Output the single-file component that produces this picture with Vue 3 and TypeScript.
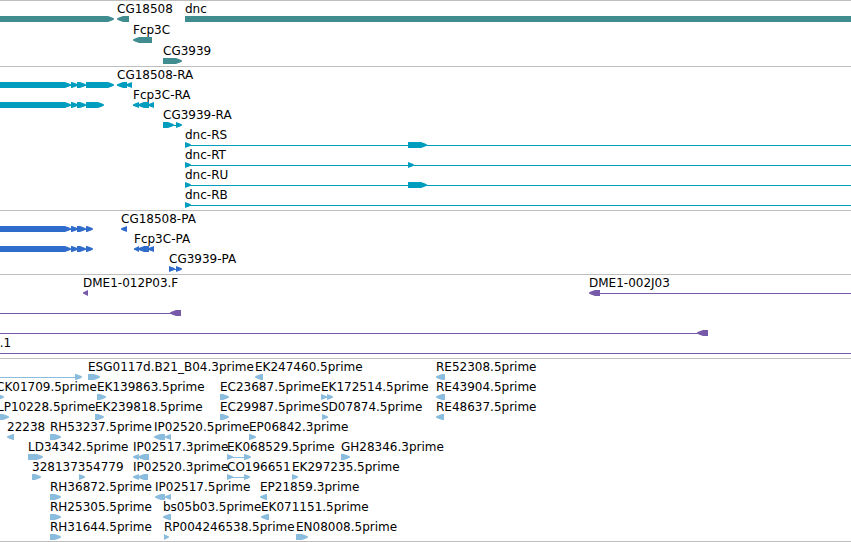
<script setup lang="ts">
type Glyph =
  | { kind: 'right' | 'left' | 'box'; from: number; to: number }
  | { kind: 'line'; from: number; to: number | 'end' }

interface Label {
  x: number
  text: string
}

interface Row {
  labels: Label[]
  glyphs: Glyph[]
}

interface Track {
  id: string
  name: string
  rows: Row[]
}

const r = (from: number, to: number): Glyph => ({ kind: 'right', from, to })
const l = (from: number, to: number): Glyph => ({ kind: 'left', from, to })
const box = (from: number, to: number): Glyph => ({ kind: 'box', from, to })
const line = (from: number, to: number | 'end'): Glyph => ({ kind: 'line', from, to })
const t = (x: number, text: string): Label => ({ x, text })
const row = (labels: Label[], glyphs: Glyph[]): Row => ({ labels, glyphs })

const tracks: Track[] = [
  {
    id: 'gene',
    name: 'Genes',
    rows: [
      row([t(117, 'CG18508'), t(185, 'dnc')], [r(-10, 114), l(117, 129), box(185, 4000)]),
      row([t(133, 'Fcp3C')], [l(133, 152)]),
      row([t(163, 'CG3939')], [r(163, 182)]),
    ],
  },
  {
    id: 'transcript',
    name: 'Transcripts',
    rows: [
      row([t(117, 'CG18508-RA')], [line(60, 90), r(-10, 71), r(71, 78), r(77, 86), r(86, 114), line(117, 132), l(117, 127), l(126, 132)]),
      row([t(133, 'Fcp3C-RA')], [line(60, 90), r(-10, 71), r(71, 78), r(77, 86), r(86, 104), line(133, 154), l(133, 139), l(138, 149), l(148, 154)]),
      row([t(163, 'CG3939-RA')], [line(163, 178), r(163, 174), r(176, 182)]),
      row([t(185, 'dnc-RS')], [line(185, 'end'), r(185, 191), r(408, 427)]),
      row([t(185, 'dnc-RT')], [line(185, 'end'), r(185, 191), r(408, 414)]),
      row([t(185, 'dnc-RU')], [line(185, 'end'), r(185, 191), r(408, 427)]),
      row([t(185, 'dnc-RB')], [line(185, 'end'), r(185, 191)]),
    ],
  },
  {
    id: 'protein',
    name: 'Proteins',
    rows: [
      row([t(121, 'CG18508-PA')], [line(60, 88), r(-10, 71), r(71, 78), r(77, 86), r(86, 93), l(121, 127)]),
      row([t(134, 'Fcp3C-PA')], [line(60, 88), r(-10, 71), r(71, 78), r(77, 86), r(86, 93), line(134, 154), l(134, 139), l(138, 149), l(148, 154)]),
      row([t(169, 'CG3939-PA')], [line(169, 178), r(169, 175), r(176, 182)]),
    ],
  },
  {
    id: 'clone',
    name: 'Clones',
    rows: [
      row([t(83, 'DME1-012P03.F'), t(589, 'DME1-002J03')], [l(83, 88), line(590, 'end'), l(589, 600)]),
      row([], [line(0, 175), l(170, 181)]),
      row([], [line(0, 702), l(697, 708)]),
      row([t(-8, '1.1')], [line(0, 'end')]),
    ],
  },
  {
    id: 'est',
    name: 'ESTs',
    rows: [
      row(
        [t(88, 'ESG0117d.B21_B04.3prime'), t(255, 'EK247460.5prime'), t(436, 'RE52308.5prime')],
        [line(0, 78), r(75, 82), r(88, 100), l(255, 263), l(436, 445)],
      ),
      row(
        [t(-4, 'CK01709.5prime'), t(97, 'EK139863.5prime'), t(220, 'EC23687.5prime'), t(321, 'EK172514.5prime'), t(436, 'RE43904.5prime')],
        [r(-5, 4), r(97, 106), r(220, 229), line(321, 330), r(321, 327), r(327, 333), l(436, 445)],
      ),
      row(
        [t(-3, 'LP10228.5prime'), t(95, 'EK239818.5prime'), t(220, 'EC29987.5prime'), t(321, 'SD07874.5prime'), t(436, 'RE48637.5prime')],
        [r(-3, 9), r(95, 104), r(220, 229), r(322, 328), l(436, 444)],
      ),
      row(
        [t(7, '22238'), t(50, 'RH53237.5prime'), t(154, 'IP02520.5prime'), t(249, 'EP06842.3prime')],
        [l(7, 14), r(50, 61), l(154, 165), l(165, 171), r(249, 256)],
      ),
      row(
        [t(28, 'LD34342.5prime'), t(133, 'IP02517.3prime'), t(227, 'EK068529.5prime'), t(341, 'GH28346.3prime')],
        [r(28, 43), l(133, 139), l(138, 149), line(227, 246), r(227, 233), r(244, 251), r(341, 350)],
      ),
      row(
        [t(32, '328137354779'), t(133, 'IP02520.3prime'), t(227, 'CO196651'), t(292, 'EK297235.5prime')],
        [r(32, 41), r(79, 85), l(133, 139), l(138, 148), line(227, 246), r(227, 233), r(244, 250), r(292, 298)],
      ),
      row(
        [t(50, 'RH36872.5prime'), t(155, 'IP02517.5prime'), t(260, 'EP21859.3prime')],
        [r(50, 61), l(155, 165), l(165, 171), l(260, 267)],
      ),
      row(
        [t(50, 'RH25305.5prime'), t(163, 'bs05b03.5prime'), t(261, 'EK071151.5prime')],
        [r(50, 61), l(163, 171), l(261, 269)],
      ),
      row(
        [t(50, 'RH31644.5prime'), t(164, 'RP004246538.5prime'), t(296, 'EN08008.5prime')],
        [r(50, 61), r(164, 169), r(296, 308)],
      ),
    ],
  },
]

const TOP = 15
const MID = 18
const BOTTOM = 21

// Outline of a feature: a flat body whose last few pixels taper to a blunt tip.
function arrow(g: Glyph): string {
  const to = g.to as number
  const [tail, head, step] = g.kind === 'right' ? [g.from, to, -1] : [to, g.from, 1]
  const tip = Math.min(6, to - g.from)
  const shoulder = head + step * tip
  const cheek = head + step * 2
  return [
    [tail, TOP],
    [shoulder, TOP],
    [cheek, TOP + 1.5],
    [head, MID - 0.6],
    [head, MID + 0.4],
    [cheek, BOTTOM - 1.5],
    [shoulder, BOTTOM],
    [tail, BOTTOM],
  ]
    .map((p) => p.join(','))
    .join(' ')
}
</script>

<template>
  <main class="browser">
    <section v-for="track in tracks" :key="track.id" :class="['track', track.id]">
      <svg v-for="(item, i) in track.rows" :key="i" class="row">
        <template v-for="(g, j) in item.glyphs" :key="j">
          <rect v-if="g.kind === 'line'" :x="g.from" :y="MID" :width="g.to === 'end' ? '100%' : g.to - g.from" height="1" />
          <rect v-else-if="g.kind === 'box'" :x="g.from" :y="TOP" width="100%" height="6" />
          <polygon v-else :points="arrow(g)" />
        </template>
        <text v-for="label in item.labels" :key="label.text" :x="label.x" y="12">{{ label.text }}</text>
      </svg>
    </section>
  </main>
</template>

<style>
body {
  margin: 0;
  background: #fff;
}
</style>

<style scoped>
.browser {
  overflow: hidden;
  border-bottom: 1px solid #bebebe;
}

.track {
  display: flex;
  flex-direction: column;
  padding-bottom: 3px;
  border-top: 1px solid #bebebe;
}

.row {
  display: block;
  width: 100%;
  height: 20px;
  overflow: visible;
}

.row text {
  fill: #000;
  font-family: "DejaVu Sans", sans-serif;
  font-size: 12px;
}

.gene {
  gap: 1px;
  fill: #408c8f;
}

.transcript {
  fill: #009dbf;
}

.protein {
  fill: #306ccc;
}

.clone {
  fill: #7659a8;
}

.est {
  padding-bottom: 2px;
  fill: #8abddd;
}
</style>
